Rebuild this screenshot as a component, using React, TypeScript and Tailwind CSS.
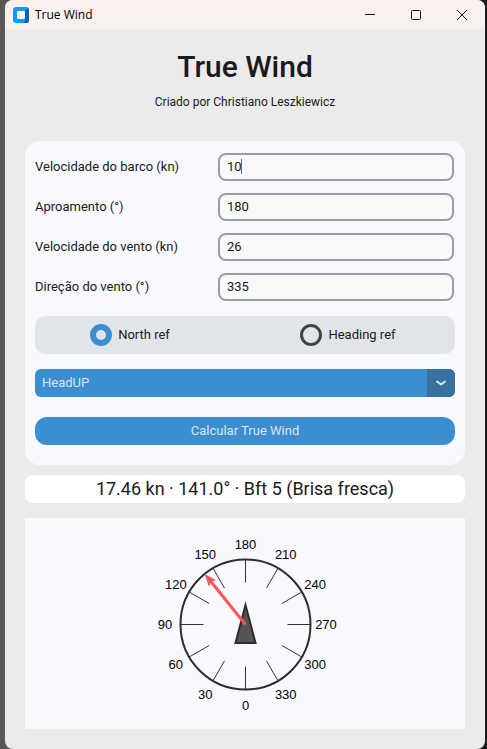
import { useState } from "react";

const fields = [
  { id: "boat-speed", label: "Velocidade do barco (kn)", value: "10", caret: true },
  { id: "heading", label: "Aproamento (°)", value: "180", caret: false },
  { id: "wind-speed", label: "Velocidade do vento (kn)", value: "26", caret: false },
  { id: "wind-direction", label: "Direção do vento (°)", value: "335", caret: false },
];

const CX = 220.5;
const CY = 106.5;

// Point at a bearing measured clockwise from the top of the dial.
function polar(degrees: number, radius: number) {
  const a = (degrees * Math.PI) / 180;
  return { x: CX + radius * Math.sin(a), y: CY - radius * Math.cos(a) };
}

function TitleBar() {
  return (
    <header className="flex h-[29px] items-center bg-[#f9f0ef] pl-2">
      <svg width="16" height="16" viewBox="0 0 16 16" className="mr-1.5" aria-hidden="true">
        <rect width="16" height="16" rx="3" fill="#0a9dff" />
        <path d="M12 4L15 1Q16 2 16 3V13Q16 16 13 16H11L12 12Z" fill="#0863b5" />
        <rect x="4" y="4" width="8" height="8" rx="1" fill="#fbf3f1" />
      </svg>
      <span className="font-['Open_Sans',sans-serif] text-xs text-black">True Wind</span>
      <div className="ml-auto flex h-full">
        <button type="button" aria-label="Minimizar" className="flex w-[46px] items-center justify-center">
          <svg width="10" height="10" viewBox="0 0 10 10"><path d="M0 4.5H10" stroke="#111" /></svg>
        </button>
        <button type="button" aria-label="Maximizar" className="flex w-[46px] items-center justify-center">
          <svg width="10" height="10" viewBox="0 0 10 10"><rect x="0.5" y="0.5" width="9" height="9" rx="1" fill="none" stroke="#111" /></svg>
        </button>
        <button type="button" aria-label="Fechar" className="flex w-[46px] items-center justify-center">
          <svg width="10" height="10" viewBox="0 0 10 10"><path d="M0 0L10 10M10 0L0 10" stroke="#111" /></svg>
        </button>
      </div>
    </header>
  );
}

function Compass() {
  const marks = Array.from({ length: 12 }, (_, i) => i * 30);
  return (
    <svg viewBox="0 0 440 211" className="mx-auto block h-[211px] w-[440px] max-w-full" role="img" aria-label="Rosa dos ventos">
      <circle cx={CX} cy={CY} r="65" fill="none" stroke="#2d2d2d" strokeWidth="2" />
      {marks.map((m) => {
        const angle = m + 180;
        const outer = polar(angle, 65);
        const inner = polar(angle, 42);
        const label = polar(angle, 80.5);
        return (
          <g key={m}>
            <line x1={outer.x} y1={outer.y} x2={inner.x} y2={inner.y} stroke="#333" />
            <text
              x={label.x}
              y={label.y + 4.5}
              textAnchor="middle"
              fill="#000"
              className="font-['Liberation_Sans',Arial,sans-serif] text-[13px]"
            >
              {m}
            </text>
          </g>
        );
      })}
      <path d="M220.5 87L210.500 125H230.500Z" fill="#555" stroke="#2d2d2d" strokeWidth="2" />
      <path d="M220.5 106.500L183 60" stroke="#ff5555" strokeWidth="3" />
      <path d="M180.500 57L190 62L185.500 63L184 67.500Z" fill="#ff5555" stroke="#ff5555" />
    </svg>
  );
}

export default function App() {
  const [reference, setReference] = useState("north");
  const radio =
    "m-0 size-[22px] appearance-none rounded-full border-3 border-[#3e454a] checked:border-6 checked:border-[#3b8ed0]";

  return (
    <div className="min-h-screen bg-linear-to-r from-[#5a5856] from-50% to-[#1c1c1c] to-50% pr-0.5 pl-[5px] font-['Roboto',sans-serif] text-[13px] leading-5 text-[#1a1a1a]">
      <div className="min-h-screen overflow-hidden rounded-lg bg-[#ebebeb]">
        <TitleBar />
        <main className="px-5 pb-5">
          <h1 className="pt-5 text-center text-[30px] leading-9 font-medium">True Wind</h1>
          <p className="mt-[7px] text-center text-xs leading-5">Criado por Christiano Leszkiewicz</p>

          <form className="mt-[29px] rounded-[15px] bg-[#f8f9fe] px-2.5 pt-3 pb-5" onSubmit={(e) => e.preventDefault()}>
            <div className="flex flex-col gap-3">
              {fields.map((f) => (
                <div key={f.id} className="flex items-center">
                  <label htmlFor={f.id} className="w-[183px] shrink-0">{f.label}</label>
                  <div className="relative mr-px min-w-0 flex-1">
                    <input
                      id={f.id}
                      defaultValue={f.value}
                      className="block h-7 w-full rounded-lg border-2 border-[#979da2] bg-[#f9f9fa] px-[7px] pb-0.5 outline-none"
                    />
                    {f.caret && <span className="absolute top-1.5 left-[23px] h-[15px] w-px bg-[#666]" />}
                  </div>
                </div>
              ))}
            </div>

            <div className="mt-[15px] grid h-[38px] grid-cols-2 items-center rounded-[10px] bg-[#e1e4e8]">
              <label className="flex items-center justify-center gap-1.5 pr-5">
                <input type="radio" name="reference" checked={reference === "north"} onChange={() => setReference("north")} className={radio} />
                North ref
              </label>
              <label className="flex items-center justify-center gap-1.5 pr-1">
                <input type="radio" name="reference" checked={reference === "heading"} onChange={() => setReference("heading")} className={radio} />
                Heading ref
              </label>
            </div>

            <div className="relative mt-[15px] overflow-hidden rounded-md">
              <select aria-label="Orientação" className="block h-7 w-full appearance-none bg-[#3b8ed0] px-[7px] text-[#dce4ee] outline-none">
                <option>HeadUP</option>
                <option>NorthUP</option>
              </select>
              <span className="pointer-events-none absolute inset-y-0 right-0 flex w-7 items-center justify-center bg-[#36719f]">
                <svg width="10" height="6" viewBox="0 0 10 6">
                  <path d="M1 1.500L5 4.500L9 1.500" fill="none" stroke="#dce4ee" strokeWidth="2" strokeLinecap="round" strokeLinejoin="round" />
                </svg>
              </span>
            </div>

            <button type="submit" className="mt-5 block h-7 w-full rounded-xl bg-[#3b8ed0] text-[#dce4ee]">
              Calcular True Wind
            </button>
          </form>

          <output className="mt-2.5 block rounded-lg bg-white text-center text-lg leading-7">
            17.46 kn · 141.0° · Bft 5 (Brisa fresca)
          </output>

          <div className="mt-[15px] bg-[#f8f9fe]">
            <Compass />
          </div>
        </main>
      </div>
    </div>
  );
}
